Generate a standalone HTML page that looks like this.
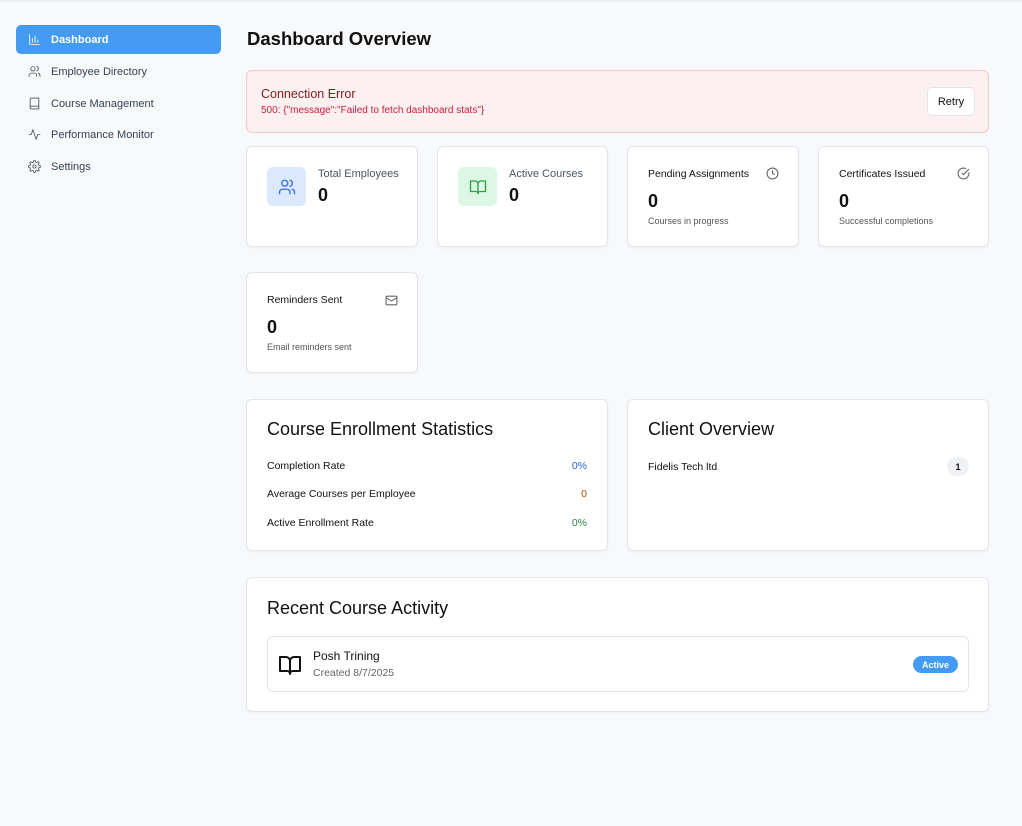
<!DOCTYPE html>
<html><head><meta charset="utf-8"><style>
*{box-sizing:border-box;margin:0;padding:0}
body{width:1022px;height:826px;background:#f8f9fb;font-family:"Liberation Sans","DejaVu Sans",sans-serif;color:#111;position:relative;overflow:hidden}
.a{position:absolute}
.nav{position:absolute;left:16px;width:205px;height:29px;border-radius:5px;font-size:11px;color:#374151;display:flex;align-items:center;padding-left:12px}
.nav svg{width:13px;height:13px;margin-right:10px;fill:none;stroke:#4b5563;stroke-width:1.6;stroke-linecap:round;stroke-linejoin:round}
.nav.on{background:#439bf4;color:#fff;font-weight:bold}
.nav.on svg{stroke:#fff}
.card{position:absolute;background:#fff;border:1px solid #e3e5e9;border-radius:6px;box-shadow:0 1px 2px rgba(0,0,0,.04)}
.lab{font-size:11px;color:#4b5563}
.big{font-size:18px;font-weight:bold;color:#111}
.sm{font-size:9px;color:#555}
.h2{font-size:18px;color:#111}
.row{position:absolute;left:20px;right:20px;font-size:10.5px;display:flex;justify-content:space-between;color:#111}
</style></head><body>
<div class="a" style="left:0;top:0;width:1022px;height:2px;background:#eceef1"></div>
<div class="nav on" style="top:25px"><svg viewBox="0 0 24 24"><path d="M3 3v18h18M8 17V10M13 17V6M18 17v-4"/></svg>Dashboard</div>
<div class="nav" style="top:57px"><svg viewBox="0 0 24 24"><circle cx="9" cy="7" r="4"/><path d="M2 21v-2a4 4 0 0 1 4-4h6a4 4 0 0 1 4 4v2M16 3.1a4 4 0 0 1 0 7.8M22 21v-2a4 4 0 0 0-3-3.9"/></svg>Employee Directory</div>
<div class="nav" style="top:89px"><svg viewBox="0 0 24 24"><path d="M4 19.5A2.5 2.5 0 0 1 6.5 17H20V2H6.5A2.5 2.5 0 0 0 4 4.5zM4 19.5A2.5 2.5 0 0 0 6.5 22H20v-5"/></svg>Course Management</div>
<div class="nav" style="top:120px"><svg viewBox="0 0 24 24"><path d="M22 12h-4l-3 9L9 3l-3 9H2"/></svg>Performance Monitor</div>
<div class="nav" style="top:152px"><svg viewBox="0 0 24 24"><circle cx="12" cy="12" r="3"/><path d="M19.4 15a1.7 1.7 0 0 0 .3 1.8l.1.1a2 2 0 1 1-2.8 2.8l-.1-.1a1.7 1.7 0 0 0-1.8-.3 1.7 1.7 0 0 0-1 1.5V21a2 2 0 1 1-4 0v-.1a1.7 1.7 0 0 0-1.1-1.5 1.7 1.7 0 0 0-1.8.3l-.1.1a2 2 0 1 1-2.8-2.8l.1-.1a1.7 1.7 0 0 0 .3-1.8 1.7 1.7 0 0 0-1.5-1H3a2 2 0 1 1 0-4h.1a1.7 1.7 0 0 0 1.5-1.1 1.7 1.7 0 0 0-.3-1.8l-.1-.1a2 2 0 1 1 2.8-2.8l.1.1a1.7 1.7 0 0 0 1.8.3H9a1.7 1.7 0 0 0 1-1.5V3a2 2 0 1 1 4 0v.1a1.7 1.7 0 0 0 1 1.5 1.7 1.7 0 0 0 1.8-.3l.1-.1a2 2 0 1 1 2.8 2.8l-.1.1a1.7 1.7 0 0 0-.3 1.8V9a1.7 1.7 0 0 0 1.5 1H21a2 2 0 1 1 0 4h-.1a1.7 1.7 0 0 0-1.5 1z"/></svg>Settings</div>

<div class="a" style="left:247px;top:28px;font-size:18.5px;font-weight:bold">Dashboard Overview</div>

<div class="a" style="left:246px;top:70px;width:743px;height:63px;background:#fdf0f0;border:1px solid #f7c7c7;border-radius:6px">
<div class="a" style="left:14px;top:16px;font-size:12.5px;color:#7f1d1d">Connection Error</div>
<div class="a" style="left:14px;top:34px;font-size:10px;color:#c81e3c">500: {"message":"Failed to fetch dashboard stats"}</div>
<div class="a" style="left:680px;top:16px;width:48px;height:29px;background:#fff;border:1px solid #e3e5e9;border-radius:5px;font-size:11px;display:flex;align-items:center;justify-content:center">Retry</div>
</div>

<div class="card" style="left:246px;top:146px;width:172px;height:101px">
<div class="a" style="left:20px;top:20px;width:39px;height:39px;background:#dbe8fd;border-radius:6px;display:flex;align-items:center;justify-content:center"><svg width="18" height="18" viewBox="0 0 24 24" fill="none" stroke="#3b6fe0" stroke-width="1.8" stroke-linecap="round"><circle cx="9" cy="7" r="4"/><path d="M2 21v-2a4 4 0 0 1 4-4h6a4 4 0 0 1 4 4v2M16 3.1a4 4 0 0 1 0 7.8M22 21v-2a4 4 0 0 0-3-3.9"/></svg></div>
<div class="a lab" style="left:71px;top:21px">Total Employees</div>
<div class="a big" style="left:71px;top:38px">0</div></div>

<div class="card" style="left:437px;top:146px;width:171px;height:101px">
<div class="a" style="left:20px;top:20px;width:39px;height:39px;background:#dcf7e3;border-radius:6px;display:flex;align-items:center;justify-content:center"><svg width="18" height="18" viewBox="0 0 24 24" fill="none" stroke="#2f9e4c" stroke-width="1.8" stroke-linejoin="round"><path d="M2 4h6a4 4 0 0 1 4 4v13a3 3 0 0 0-3-3H2zM22 4h-6a4 4 0 0 0-4 4v13a3 3 0 0 1 3-3h7z"/></svg></div>
<div class="a lab" style="left:71px;top:21px">Active Courses</div>
<div class="a big" style="left:71px;top:38px">0</div></div>

<div class="card" style="left:627px;top:146px;width:172px;height:101px">
<div class="a" style="left:20px;top:21px;font-size:10.5px">Pending Assignments</div>
<svg class="a" style="left:138px;top:20px" width="13" height="13" viewBox="0 0 24 24" fill="none" stroke="#666" stroke-width="2"><circle cx="12" cy="12" r="10"/><path d="M12 6v6l4 2"/></svg>
<div class="a big" style="left:20px;top:44px">0</div>
<div class="a sm" style="left:20px;top:69px">Courses in progress</div></div>

<div class="card" style="left:818px;top:146px;width:171px;height:101px">
<div class="a" style="left:20px;top:21px;font-size:10.5px">Certificates Issued</div>
<svg class="a" style="left:138px;top:20px" width="13" height="13" viewBox="0 0 24 24" fill="none" stroke="#666" stroke-width="2"><path d="M21.8 10A10 10 0 1 1 17 3.3"/><path d="M9 11l3 3L22 4"/></svg>
<div class="a big" style="left:20px;top:44px">0</div>
<div class="a sm" style="left:20px;top:69px">Successful completions</div></div>

<div class="card" style="left:246px;top:272px;width:172px;height:101px">
<div class="a" style="left:20px;top:21px;font-size:10.5px">Reminders Sent</div>
<svg class="a" style="left:138px;top:21px" width="13" height="13" viewBox="0 0 24 24" fill="none" stroke="#666" stroke-width="2"><rect x="2" y="4" width="20" height="16" rx="2"/><path d="M22 7l-10 6L2 7"/></svg>
<div class="a big" style="left:20px;top:44px">0</div>
<div class="a sm" style="left:20px;top:69px">Email reminders sent</div></div>

<div class="card" style="left:246px;top:399px;width:362px;height:152px">
<div class="a h2" style="left:20px;top:19px">Course Enrollment Statistics</div>
<div class="row" style="top:60px"><span>Completion Rate</span><span style="color:#2563eb">0%</span></div>
<div class="row" style="top:88px"><span>Average Courses per Employee</span><span style="color:#c2410c">0</span></div>
<div class="row" style="top:117px"><span>Active Enrollment Rate</span><span style="color:#2f7d4c">0%</span></div>
</div>

<div class="card" style="left:627px;top:399px;width:362px;height:152px">
<div class="a h2" style="left:20px;top:19px">Client Overview</div>
<div class="a" style="left:20px;top:61px;font-size:10.5px">Fidelis Tech ltd</div>
<div class="a" style="left:319px;top:57px;width:22px;height:19px;border-radius:10px;background:#f0f1f3;font-size:9px;font-weight:bold;display:flex;align-items:center;justify-content:center">1</div>
</div>

<div class="card" style="left:246px;top:577px;width:743px;height:135px">
<div class="a h2" style="left:20px;top:20px">Recent Course Activity</div>
<div class="a" style="left:20px;top:58px;width:702px;height:56px;border:1px solid #e3e5e9;border-radius:6px">
<svg class="a" style="left:9px;top:16px" width="26" height="24" viewBox="0 0 24 24" fill="none" stroke="#111" stroke-width="2" stroke-linejoin="round"><path d="M2 4h6a4 4 0 0 1 4 4v13a3 3 0 0 0-3-3H2zM22 4h-6a4 4 0 0 0-4 4v13a3 3 0 0 1 3-3h7z"/></svg>
<div class="a" style="left:45px;top:12px;font-size:12px">Posh Trining</div>
<div class="a" style="left:45px;top:30px;font-size:10.5px;color:#666">Created 8/7/2025</div>
<div class="a" style="left:645px;top:19px;width:45px;height:17px;border-radius:9px;background:#439bf4;color:#fff;font-size:9px;font-weight:bold;display:flex;align-items:center;justify-content:center">Active</div>
</div></div>
</body></html>
